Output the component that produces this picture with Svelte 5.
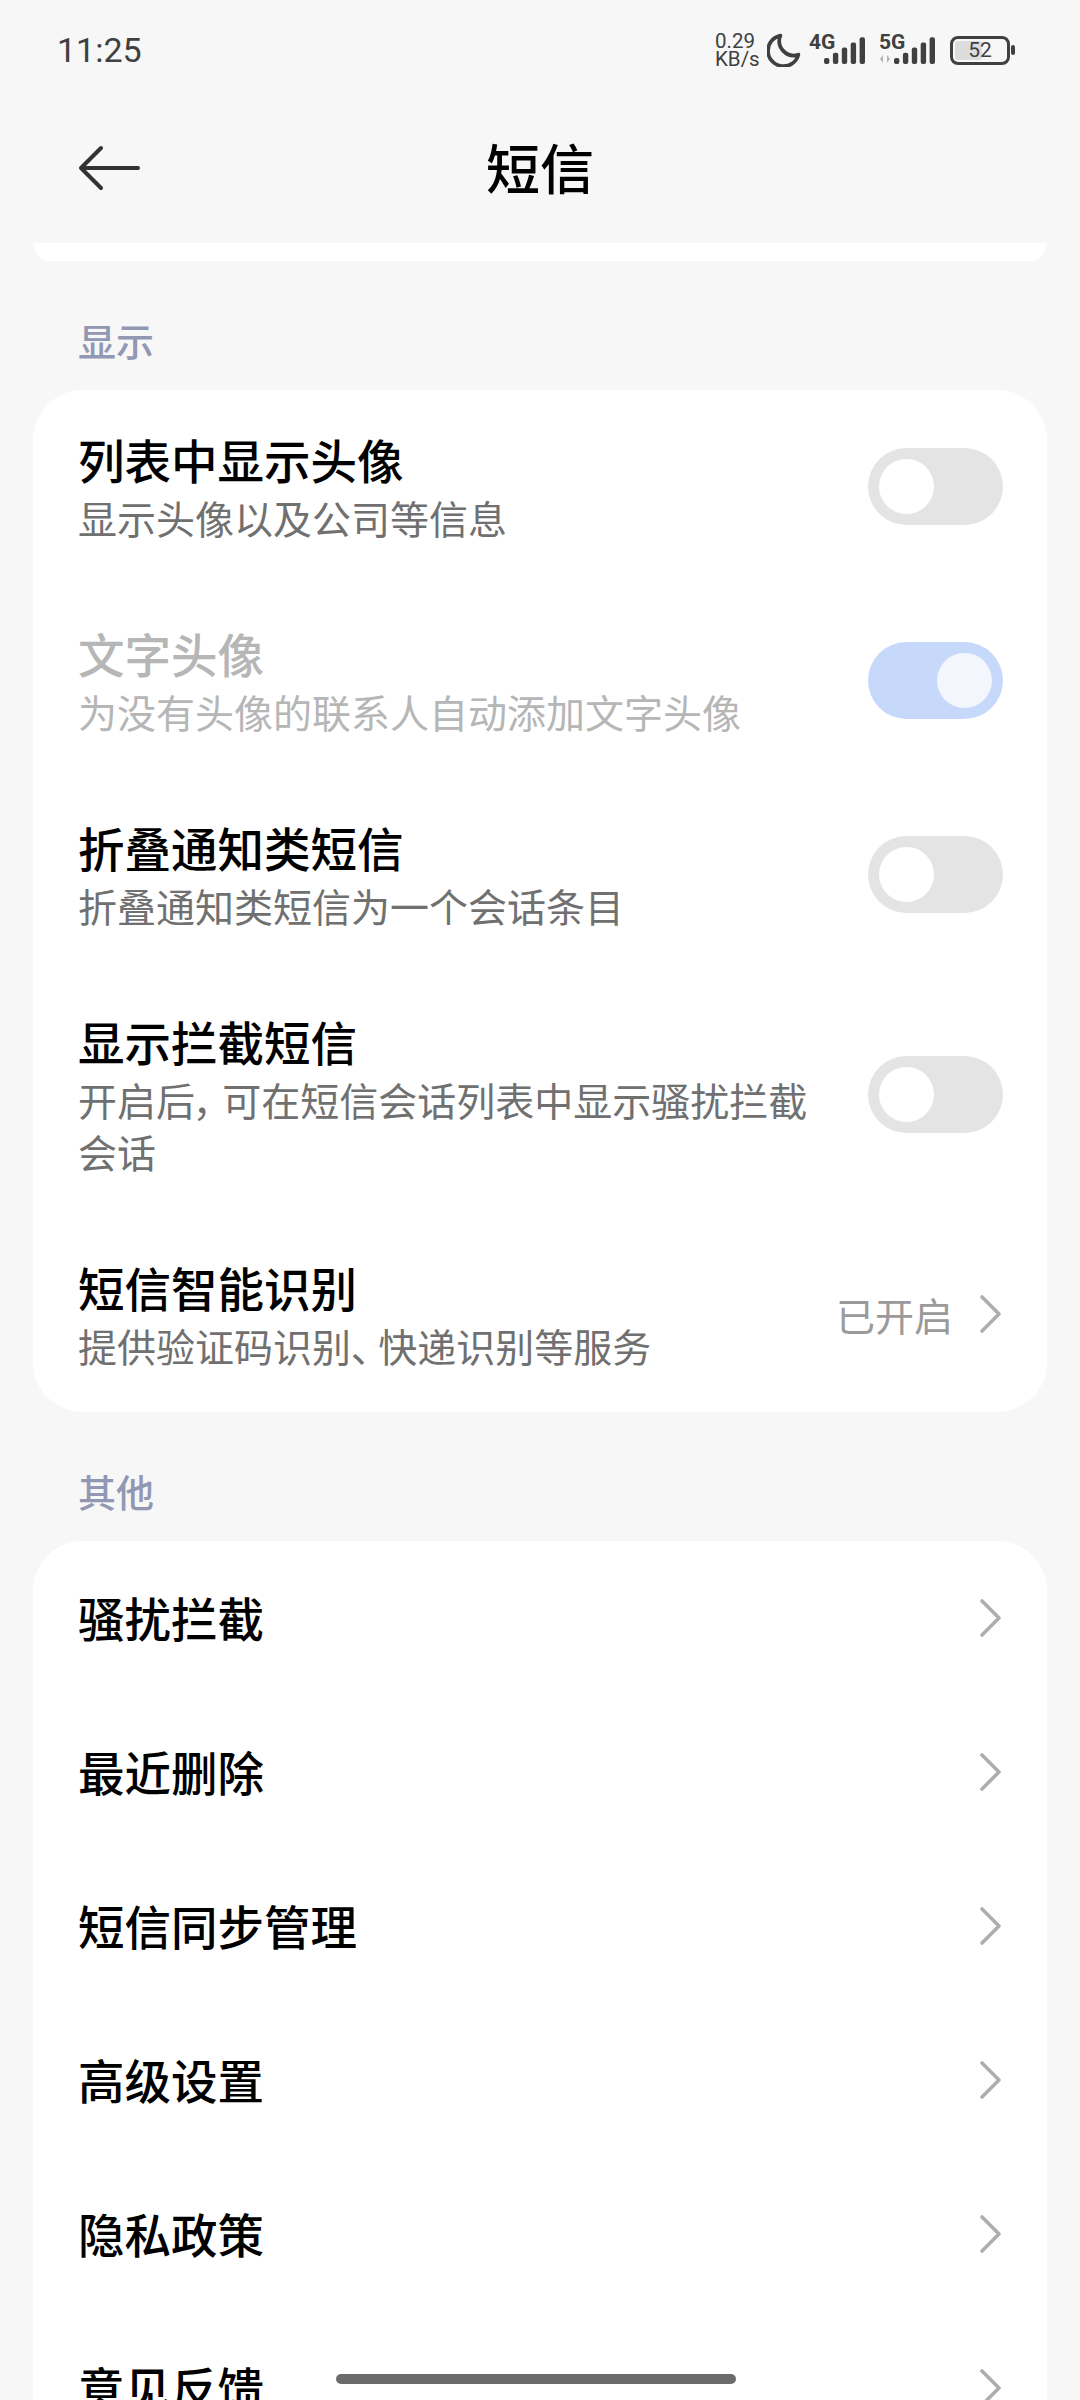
<script>
  const displayRows = [
    { title: '列表中显示头像', sub: '显示头像以及公司等信息', toggle: 'off' },
    { title: '文字头像', sub: '为没有头像的联系人自动添加文字头像', toggle: 'on', disabled: true },
    { title: '折叠通知类短信', sub: '折叠通知类短信为一个会话条目', toggle: 'off' },
    { title: '显示拦截短信', sub: '开启后，\u2009可在短信会话列表中显示骚扰拦截会话', toggle: 'off', tall: true },
    { title: '短信智能识别', sub: '提供验证码识别、\u2009快递识别等服务', value: '已开启' }
  ];
  const otherRows = ['骚扰拦截', '最近删除', '短信同步管理', '高级设置', '隐私政策', '意见反馈'];
</script>

{#snippet signal()}
  <svg class="signal" viewBox="0 0 41 28" width="41" height="28">
    {#each [0, 1, 2, 3, 4] as i}
      <rect x={i * 8.9} y={21 - i * 5.2} width="5.4" height={6 + i * 5.2} rx="2" fill="#404040" />
    {/each}
  </svg>
{/snippet}

{#snippet chevron()}
  <svg class="chevron" viewBox="0 0 24 40" width="24" height="40">
    <path d="M3 3 L20 20 L3 37" fill="none" stroke="#adadad" stroke-width="3.6" stroke-linecap="round" stroke-linejoin="round" />
  </svg>
{/snippet}

<div class="page">
  <div class="status">
    <span class="time">11:25</span>
    <div class="status-right">
      <div class="speed"><span>0.29</span><span>KB/s</span></div>
      <svg class="moon" viewBox="0 0 33 33" width="34" height="34">
        <path d="M13 2.5 A15 15 0 1 0 30.5 21 A14 14 0 0 1 13 2.5 Z" fill="none" stroke="#404040" stroke-width="3.6" stroke-linejoin="round" />
      </svg>
      <div class="net">
        <span class="gen">4G</span>
        {@render signal()}
      </div>
      <div class="net net-five">
        <span class="gen">5G</span>
        <svg class="updown" viewBox="0 0 12 10" width="12" height="10">
          <path d="M1 5 L4 1 V9 Z M8 1 L11 5 L8 9 Z" fill="#b5b5b5" />
        </svg>
        {@render signal()}
      </div>
      <div class="battery">
        <div class="battery-level"></div>
        <span>52</span>
      </div>
      <div class="battery-nub"></div>
    </div>
  </div>

  <header class="nav">
    <svg class="back" viewBox="0 0 62 46" width="62" height="46">
      <path d="M23 3 L3 23 L23 43 M3 23 H60" fill="none" stroke="#333" stroke-width="4" stroke-linecap="round" stroke-linejoin="round" />
    </svg>
    <h1>短信</h1>
  </header>

  <div class="card-tail"></div>

  <div class="section-label">显示</div>
  <section class="card">
    {#each displayRows as row}
      <div class="row" class:disabled={row.disabled} class:tall={row.tall}>
        <div class="text">
          <div class="title">{row.title}</div>
          <div class="sub">{row.sub}</div>
        </div>
        {#if row.toggle}
          <div class="toggle" class:on={row.toggle === 'on'}><div class="knob"></div></div>
        {:else}
          <span class="value">{row.value}</span>
          {@render chevron()}
        {/if}
      </div>
    {/each}
  </section>

  <div class="section-label">其他</div>
  <section class="card">
    {#each otherRows as title}
      <div class="row link">
        <div class="title">{title}</div>
        {@render chevron()}
      </div>
    {/each}
  </section>

  <div class="home-bar"></div>
</div>

<style>
  :global(body) {
    margin: 0;
    background: #f7f7f7;
  }

  .page {
    position: relative;
    width: 1080px;
    height: 2400px;
    overflow: hidden;
    background: #f7f7f7;
    font-family: "Noto Sans CJK SC", "Noto Sans", sans-serif;
    color: #000;
  }

  .status {
    height: 100px;
    padding: 0 65px 0 57px;
    display: flex;
    align-items: center;
    justify-content: space-between;
    box-sizing: border-box;
  }

  .time {
    font-family: Roboto, sans-serif;
    font-size: 34px;
    color: #404040;
  }

  .status-right {
    display: flex;
    align-items: center;
    color: #404040;
    font-family: Roboto, sans-serif;
  }

  .speed {
    display: flex;
    flex-direction: column;
    width: 46px;
    margin-right: 6px;
    font-size: 20.5px;
    line-height: 18.5px;
    white-space: nowrap;
  }

  .net {
    position: relative;
    width: 56px;
    height: 30px;
    margin-left: 8px;
    display: flex;
    justify-content: flex-end;
    align-items: flex-end;
  }

  .net-five {
    margin-left: 14px;
  }

  .gen {
    position: absolute;
    left: 0;
    top: -1px;
    font-size: 21px;
    line-height: 17px;
    font-weight: 700;
  }

  .updown {
    position: absolute;
    left: 0;
    bottom: 1px;
  }

  .signal {
    display: block;
  }

  .battery {
    position: relative;
    width: 60px;
    height: 29px;
    margin-left: 15px;
    border: 3px solid #404040;
    border-radius: 8px;
    box-sizing: border-box;
    display: flex;
    align-items: center;
    justify-content: center;
    font-size: 21px;
  }

  .battery-level {
    position: absolute;
    left: 2px;
    top: 2px;
    bottom: 2px;
    width: 50%;
    background: #dcdcdc;
    border-radius: 3px;
  }

  .battery span {
    position: relative;
  }

  .battery-nub {
    width: 4px;
    height: 10px;
    margin-left: 1px;
    background: #404040;
    border-radius: 2px;
  }

  .nav {
    position: relative;
    height: 137px;
    display: flex;
    align-items: center;
    justify-content: center;
  }

  .back {
    position: absolute;
    left: 78px;
    top: 45px;
  }

  h1 {
    margin: 0 0 3px;
    font-size: 54px;
    font-weight: 500;
    line-height: 1;
  }

  .card-tail {
    height: 18px;
    margin: 6px 33px 0;
    background: #fff;
    border-radius: 0 0 24px 24px;
  }

  .section-label {
    height: 129px;
    padding: 53px 0 0 78px;
    box-sizing: border-box;
    font-size: 38px;
    line-height: 52px;
    font-weight: 500;
    color: #9298b4;
  }

  .card {
    margin: 0 33px;
    background: #fff;
    border-radius: 50px;
  }

  .row {
    height: 194px;
    padding: 0 44px 2px 45px;
    display: flex;
    align-items: center;
    box-sizing: border-box;
  }

  .row.tall {
    height: 246px;
  }

  .row.link {
    height: 154px;
    justify-content: space-between;
  }

  .row.link .chevron {
    margin-top: 2px;
  }

  .text {
    flex: 1;
    min-width: 0;
    padding-right: 30px;
  }

  .title {
    font-size: 46.5px;
    line-height: 60px;
    font-weight: 500;
  }

  .sub {
    margin-top: 2px;
    font-size: 39px;
    line-height: 52px;
    color: #707070;
    font-feature-settings: "palt";
  }

  .disabled .title,
  .disabled .sub {
    color: #b6b6b6;
  }

  .toggle {
    flex: none;
    width: 135px;
    height: 77px;
    padding: 11px;
    box-sizing: border-box;
    border-radius: 39px;
    background: #e4e4e4;
  }

  .toggle.on {
    background: #c6d9fb;
    display: flex;
    justify-content: flex-end;
  }

  .knob {
    width: 55px;
    height: 55px;
    border-radius: 50%;
    background: #fff;
  }

  .toggle.on .knob {
    background: #f3f6fd;
  }

  .value {
    font-size: 39px;
    color: #9a9a9a;
    margin-right: 26px;
  }

  .chevron {
    flex: none;
    display: block;
  }

  .home-bar {
    position: absolute;
    left: 336px;
    top: 2374px;
    width: 400px;
    height: 10px;
    border-radius: 5px;
    background: #6b6b6b;
  }
</style>
